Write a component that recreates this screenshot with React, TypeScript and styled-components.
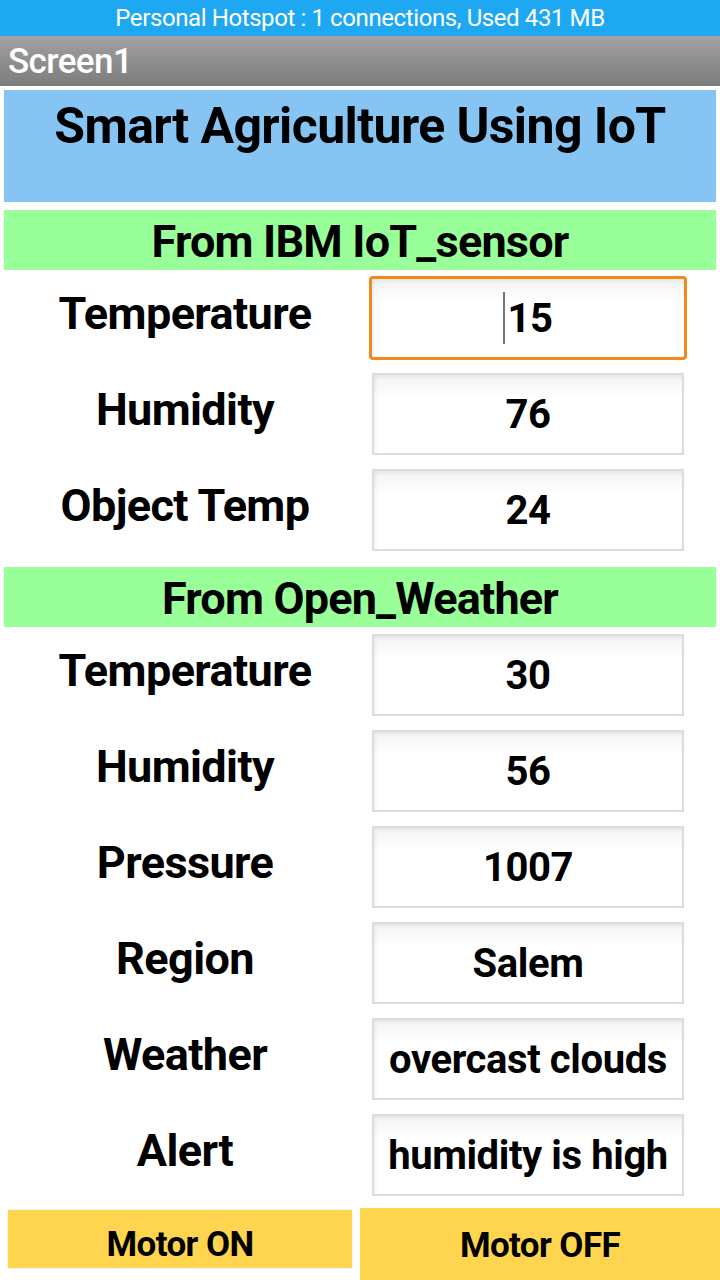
import React from 'react';
import styled, { createGlobalStyle, css } from 'styled-components';

const GlobalStyle = createGlobalStyle`
  html, body {
    margin: 0;
    padding: 0;
    background: #ffffff;
    font-family: Roboto, "Noto Sans", sans-serif;
  }
`;

type Field = { label: string; value: string; focused?: boolean };

const sensor: Field[] = [
  { label: 'Temperature', value: '15', focused: true },
  { label: 'Humidity', value: '76' },
  { label: 'Object Temp', value: '24' },
];

const weather: Field[] = [
  { label: 'Temperature', value: '30' },
  { label: 'Humidity', value: '56' },
  { label: 'Pressure', value: '1007' },
  { label: 'Region', value: 'Salem' },
  { label: 'Weather', value: 'overcast clouds' },
  { label: 'Alert', value: 'humidity is high' },
];

const Rows: React.FC<{ items: Field[] }> = ({ items }) => (
  <>
    {items.map((f, i) => (
      <Row key={i}>
        <Label>{f.label}</Label>
        <Box $focused={f.focused}>
          {f.focused && <Caret />}
          {f.value}
        </Box>
      </Row>
    ))}
  </>
);

const App: React.FC = () => {
  return (
    <Page>
      <GlobalStyle />
      <StatusBar>Personal Hotspot : 1 connections, Used 431 MB</StatusBar>
      <TitleBar>Screen1</TitleBar>
      <Content>
        <Banner>Smart Agriculture Using IoT</Banner>
        <Section>From IBM IoT_sensor</Section>
        <Rows items={sensor} />
        <Section $gap={9}>From Open_Weather</Section>
        <Rows items={weather} />
      </Content>
      <Buttons>
        <MotorOn>Motor ON</MotorOn>
        <MotorOff>Motor OFF</MotorOff>
      </Buttons>
    </Page>
  );
};

export default App;

const Page = styled.div`
  width: 720px;
  height: 1280px;
  overflow: hidden;
  display: flex;
  flex-direction: column;
`;

const StatusBar = styled.div`
  height: 36px;
  background: #1ea8f1;
  color: #ffffff;
  font-size: 24px;
  display: flex;
  align-items: center;
  justify-content: center;
  letter-spacing: -0.4px;
`;

const TitleBar = styled.div`
  height: 50px;
  background: linear-gradient(#a2a2a2, #7c7c7c);
  color: #ffffff;
  font-size: 35px;
  font-weight: 500;
  display: flex;
  align-items: center;
  padding-left: 8px;
  letter-spacing: -0.6px;
`;

const Content = styled.div`
  display: flex;
  flex-direction: column;
  padding: 4px 4px 0;
`;

const Banner = styled.div`
  height: 112px;
  background: #86c5f3;
  color: #000;
  font-size: 50px;
  font-weight: 700;
  text-align: center;
  line-height: 72px;
  letter-spacing: -0.6px;
`;

const Section = styled.div<{ $gap?: number }>`
  margin-top: ${(p) => p.$gap ?? 8}px;
  height: 60px;
  background: #99ff99;
  font-size: 45px;
  font-weight: 700;
  display: flex;
  align-items: center;
  justify-content: center;
  padding-top: 3px;
  box-sizing: border-box;
  letter-spacing: -0.8px;
`;

const Row = styled.div`
  display: flex;
  align-items: center;
  height: 96px;
  margin-left: -4px;
`;

const Label = styled.div`
  width: 370px;
  text-align: center;
  font-size: 45px;
  font-weight: 700;
  letter-spacing: -0.6px;
  padding-bottom: 10px;
`;

const Box = styled.div<{ $focused?: boolean }>`
  position: relative;
  margin-left: 2px;
  width: 312px;
  height: 82px;
  box-sizing: border-box;
  border: 2px solid #dcdcdc;
  background: linear-gradient(#f3f3f3, #ffffff 30%);
  box-shadow: inset 2px 2px 4px rgba(0, 0, 0, 0.06);
  display: flex;
  align-items: center;
  justify-content: center;
  font-size: 40px;
  font-weight: 700;
  letter-spacing: -0.4px;
  white-space: nowrap;
  ${(p) =>
    p.$focused &&
    css`
      border: 3px solid #f2891c;
      border-radius: 4px;
      width: 318px;
      height: 84px;
      margin-left: -1px;
    `}
`;

const Caret = styled.span`
  display: inline-block;
  width: 2px;
  height: 52px;
  background: #777;
  margin-right: 2px;
`;

const Buttons = styled.div`
  display: flex;
  align-items: flex-start;
  padding-top: 5px;
`;

const buttonStyle = css`
  background: #ffd54f;
  font-size: 35px;
  font-weight: 700;
  letter-spacing: -0.6px;
  display: flex;
  align-items: center;
  justify-content: center;
  box-sizing: border-box;
`;

const MotorOn = styled.div`
  ${buttonStyle}
  width: 344px;
  height: 58px;
  margin: 2px 8px 0;
  padding-top: 10px;
  box-shadow: 0 0 2px rgba(0, 0, 0, 0.15);
`;

const MotorOff = styled.div`
  ${buttonStyle}
  width: 360px;
  height: 72px;
  padding-top: 2px;
`;
